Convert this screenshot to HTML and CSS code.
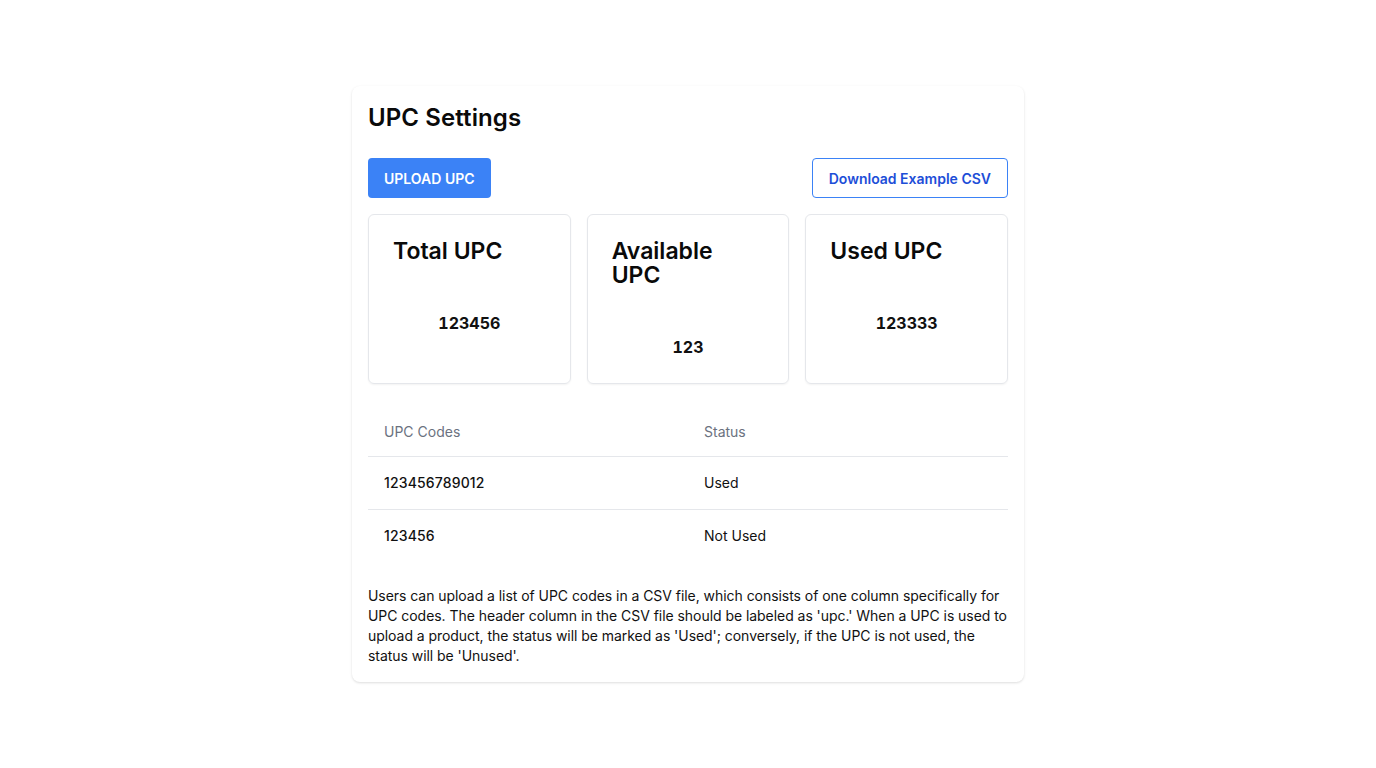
FILE: index.html
```html
<!DOCTYPE html>
<html lang="en">
<head>
<meta charset="utf-8">
<title>UPC Settings</title>
<link rel="stylesheet" href="styles.css">
</head>
<body>
<main class="page">
  <section class="panel">
    <h1 class="title">UPC Settings</h1>
    <div class="actions">
      <button class="btn btn-primary">UPLOAD UPC</button>
      <button class="btn btn-outline">Download Example CSV</button>
    </div>
    <div class="stats">
      <div class="stat">
        <h2 class="stat-title">Total UPC</h2>
        <div class="stat-value">123456</div>
      </div>
      <div class="stat">
        <h2 class="stat-title">Available UPC</h2>
        <div class="stat-value">123</div>
      </div>
      <div class="stat">
        <h2 class="stat-title">Used UPC</h2>
        <div class="stat-value">123333</div>
      </div>
    </div>
    <table class="codes">
      <thead>
        <tr><th>UPC Codes</th><th>Status</th></tr>
      </thead>
      <tbody>
        <tr><td class="code">123456789012</td><td>Used</td></tr>
        <tr><td class="code">123456</td><td>Not Used</td></tr>
      </tbody>
    </table>
    <p class="note">Users can upload a list of UPC codes in a CSV file, which consists of one column specifically for UPC codes. The header column in the CSV file should be labeled as 'upc.' When a UPC is used to upload a product, the status will be marked as 'Used'; conversely, if the UPC is not used, the status will be 'Unused'.</p>
  </section>
</main>
</body>
</html>
```
FILE: styles.css
```css
* { box-sizing: border-box; }
html, body { margin: 0; padding: 0; background: #ffffff; }
body {
  font-family: Inter, "Noto Sans", "Liberation Sans", sans-serif;
  color: #111111;
  font-size: 14px;
  line-height: 20px;
}
.page {
  min-height: 100vh;
  display: flex;
  align-items: center;
  justify-content: center;
}
.panel {
  width: 672px;
  padding: 16px;
  background: #fff;
  border-radius: 8px;
  box-shadow: 0 1px 3px rgba(0,0,0,0.10), 0 1px 2px rgba(0,0,0,0.04);
}
.title {
  margin: 0;
  font-size: 24px;
  line-height: 32px;
  font-weight: 600;
  letter-spacing: 0.1px;
  color: #0a0a0a;
}
.actions {
  margin-top: 24px;
  display: flex;
  justify-content: space-between;
  align-items: center;
}
.btn {
  height: 40px;
  padding: 0 16px;
  font-family: inherit;
  font-size: 14px;
  font-weight: 600;
  border-radius: 4px;
  cursor: pointer;
}
.btn-primary {
  background: #3b82f6;
  color: #fff;
  border: none;
}
.btn-outline {
  background: #fff;
  color: #1d4ed8;
  border: 1px solid #3b82f6;
}
.stats {
  margin-top: 16px;
  display: grid;
  grid-template-columns: repeat(3, 1fr);
  gap: 16px;
}
.stat {
  border: 1px solid #e5e7eb;
  border-radius: 6px;
  padding: 24px;
  box-shadow: 0 1px 2px rgba(0,0,0,0.05);
}
.stat-title {
  margin: 0;
  font-size: 23px;
  line-height: 24px;
  font-weight: 600;
  color: #0a0a0a;
}
.stat-value {
  margin-top: 48px;
  text-align: center;
  font-size: 16px;
  line-height: 24px;
  font-weight: 700;
  font-variant-numeric: tabular-nums;
}
.codes {
  margin-top: 20px;
  width: 100%;
  border-collapse: collapse;
  table-layout: fixed;
}
.codes th, .codes td {
  width: 50%;
  text-align: left;
  padding: 16px;
  font-size: 14px;
  line-height: 20px;
}
.codes th {
  padding: 18px 16px 14px;
  font-weight: 400;
  color: #6b7280;
}
.codes thead tr, .codes tbody tr:not(:last-child) {
  border-bottom: 1px solid #e5e7eb;
}
.codes td {
  color: #111;
  font-weight: 400;
}
.codes td.code {
  font-weight: 500;
  letter-spacing: 0.15px;
}
.note {
  margin: 24px 0 0;
  font-size: 14px;
  line-height: 20px;
  letter-spacing: -0.05px;
  color: #111;
}
```
